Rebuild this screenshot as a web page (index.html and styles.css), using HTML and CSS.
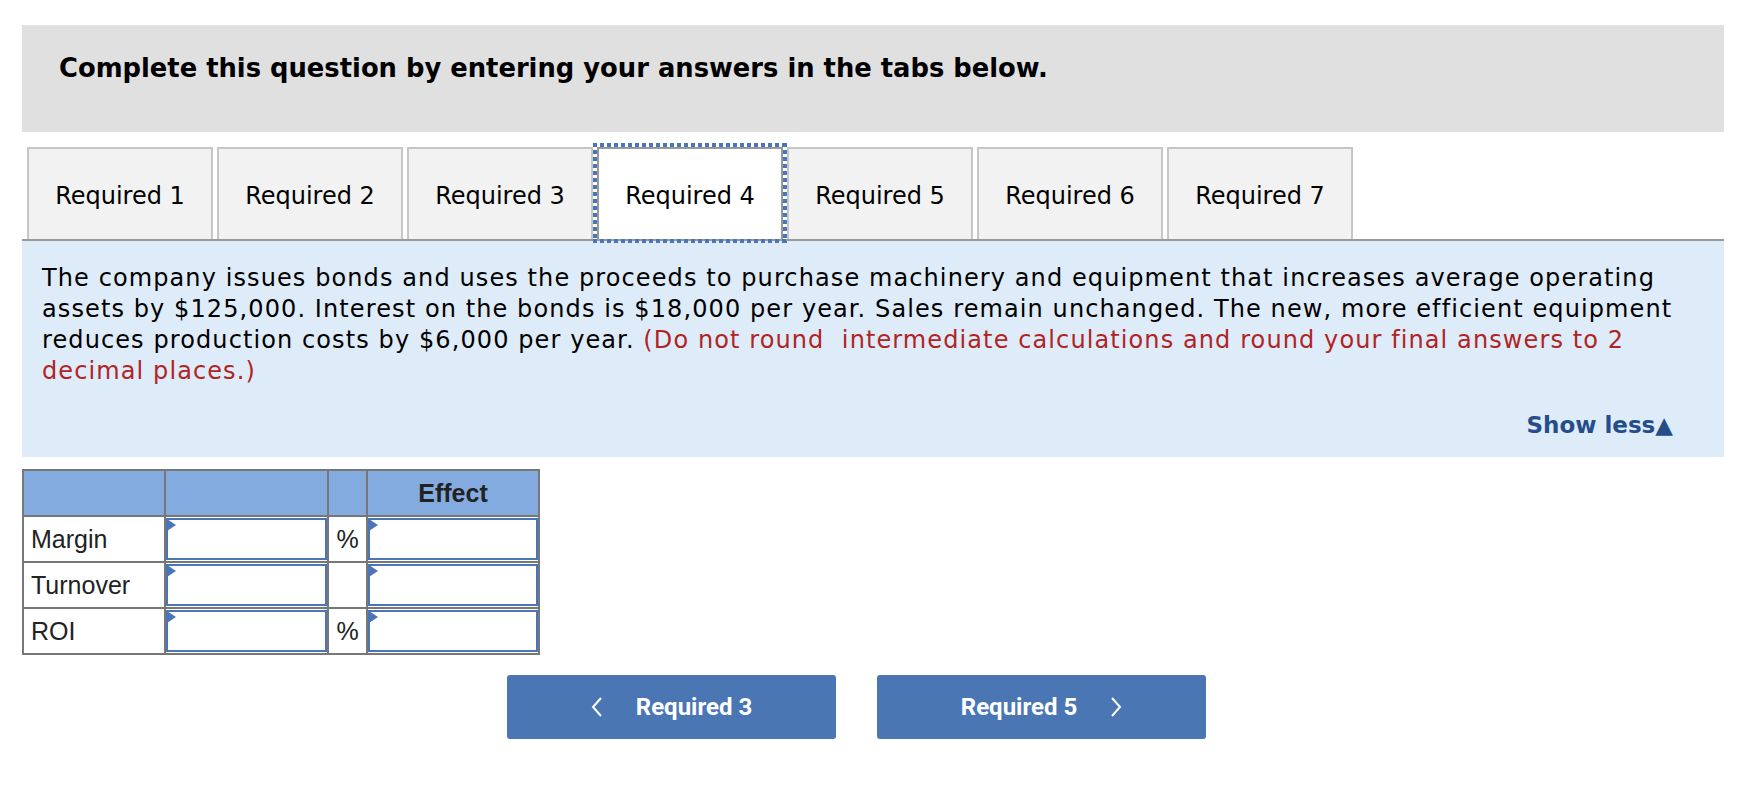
FILE: index.html
```html
<!DOCTYPE html>
<html lang="en">
<head>
    <meta charset="UTF-8">
    <meta name="viewport" content="width=device-width, initial-scale=1.0">
    <title>Required 4</title>
    <link rel="stylesheet" href="styles.css">
</head>
<body>
    <div class="page">
        <div class="instructions">
            <h2>Complete this question by entering your answers in the tabs below.</h2>
        </div>

        <ul class="tabs">
            <li class="tab">Required 1</li>
            <li class="tab">Required 2</li>
            <li class="tab">Required 3</li>
            <li class="tab active">Required 4</li>
            <li class="tab">Required 5</li>
            <li class="tab">Required 6</li>
            <li class="tab">Required 7</li>
        </ul>

        <div class="panel">
            <p class="question">The company issues bonds and uses the proceeds to purchase machinery and equipment that increases average operating assets by $125,000. Interest on the bonds is $18,000 per year. Sales remain unchanged. The new, more efficient equipment reduces production costs by $6,000 per year. <span class="hint">(Do not round&nbsp; intermediate calculations and round your final answers to 2 decimal places.)</span></p>
            <div class="show-less">Show less&#9650;</div>
        </div>

        <table class="answers">
            <colgroup>
                <col class="col-label">
                <col class="col-value">
                <col class="col-unit">
                <col class="col-effect">
            </colgroup>
            <tr class="head">
                <th></th>
                <th></th>
                <th></th>
                <th>Effect</th>
            </tr>
            <tr>
                <td class="label">Margin</td>
                <td class="entry"><div class="field"><input type="text"></div></td>
                <td class="unit">%</td>
                <td class="entry"><div class="field"><input type="text"></div></td>
            </tr>
            <tr>
                <td class="label">Turnover</td>
                <td class="entry"><div class="field"><input type="text"></div></td>
                <td class="unit"></td>
                <td class="entry"><div class="field"><input type="text"></div></td>
            </tr>
            <tr>
                <td class="label">ROI</td>
                <td class="entry"><div class="field"><input type="text"></div></td>
                <td class="unit">%</td>
                <td class="entry"><div class="field"><input type="text"></div></td>
            </tr>
        </table>

        <div class="nav">
            <button class="nav-btn">
                <svg width="12" height="20" viewBox="0 0 12 20"><polyline points="10,1 2,10 10,19" fill="none" stroke="#fff" stroke-width="2"/></svg>
                <span>Required 3</span>
            </button>
            <button class="nav-btn">
                <span>Required 5</span>
                <svg width="12" height="20" viewBox="0 0 12 20"><polyline points="2,1 10,10 2,19" fill="none" stroke="#fff" stroke-width="2"/></svg>
            </button>
        </div>
    </div>
</body>
</html>
```

FILE: styles.css
```css
body {
    margin: 0;
    background-color: #fff;
    color: #000;
    font-family: "DejaVu Sans", Verdana, sans-serif;
}

.page {
    margin: 25px 29px 0 22px;
}

.instructions {
    background-color: #e0e0e0;
    height: 107px;
    padding: 28px 0 0 37px;
    box-sizing: border-box;
}

.instructions h2 {
    margin: 0;
    font-size: 25.8px;
    line-height: 30px;
    font-weight: bold;
}

.tabs {
    list-style: none;
    margin: 15px 0 0 0;
    padding: 0 0 0 5px;
    display: flex;
    border-bottom: 2px solid #999;
}

.tab {
    position: relative;
    width: 186px;
    height: 92px;
    margin-right: 4px;
    padding-top: 3px;
    box-sizing: border-box;
    border: 2px solid #c6c6c6;
    border-bottom: none;
    background-color: #f2f2f2;
    font-size: 24px;
    display: flex;
    align-items: center;
    justify-content: center;
}

.tab.active {
    background-color: #fff;
    border-color: #999;
}

/* focus ring drawn as square dots */
.tab.active::before {
    content: "";
    position: absolute;
    top: -6px;
    left: -6px;
    right: -6px;
    bottom: -4px;
    background:
        repeating-linear-gradient(90deg, #4a76b8 0 4px, transparent 4px 7px) top left / 100% 4px no-repeat,
        repeating-linear-gradient(90deg, #4a76b8 0 4px, transparent 4px 7px) bottom left / 100% 4px no-repeat,
        repeating-linear-gradient(180deg, #4a76b8 0 4px, transparent 4px 7px) top left / 4px 100% no-repeat,
        repeating-linear-gradient(180deg, #4a76b8 0 4px, transparent 4px 7px) top right / 4px 100% no-repeat;
}

.panel {
    background-color: #deebf8;
    padding: 22px 12px 16px 20px;
}

.question {
    margin: 0;
    font-size: 24px;
    letter-spacing: 1.1px;
    line-height: 31px;
}

.hint {
    color: #b02424;
}

.show-less {
    margin-top: 23px;
    text-align: right;
    padding-right: 39px;
    font-size: 23px;
    line-height: 31px;
    font-weight: bold;
    color: #254d8a;
}

.answers {
    margin-top: 12px;
    border-collapse: collapse;
    table-layout: fixed;
    width: 516px;
    font-family: "Liberation Sans", Arial, sans-serif;
    font-size: 25px;
    color: #222;
}

.col-label { width: 142px; }
.col-value { width: 163px; }
.col-unit { width: 39px; }
.col-effect { width: 172px; }

.answers tr {
    height: 46px;
}

.answers th,
.answers td {
    border: 2px solid #777;
    padding: 0;
}

.answers .head th {
    background-color: #84abe0;
    font-weight: bold;
    text-align: center;
}

.answers .label {
    padding-left: 7px;
}

.answers .unit {
    text-align: center;
}

.field {
    position: relative;
}

.field::before {
    content: "";
    position: absolute;
    top: 1px;
    left: 1px;
    border-left: 9px solid #4a76b8;
    border-top: 6px solid transparent;
    border-bottom: 6px solid transparent;
}

.field input {
    display: block;
    width: 100%;
    height: 42px;
    margin: 0;
    padding: 0;
    box-sizing: border-box;
    border: 2px solid #4a76b8;
    border-radius: 0;
    background: #fff;
    outline: none;
    appearance: none;
}

.nav {
    display: flex;
    gap: 41px;
    margin-top: 20px;
    padding-left: 485px;
}

.nav-btn {
    width: 329px;
    height: 64px;
    border: none;
    border-radius: 3px;
    background-color: #4a76b4;
    color: #fff;
    font-family: Roboto, "Liberation Sans", sans-serif;
    font-size: 24px;
    font-weight: bold;
    display: flex;
    align-items: center;
    justify-content: center;
    gap: 33px;
    cursor: pointer;
}
```
